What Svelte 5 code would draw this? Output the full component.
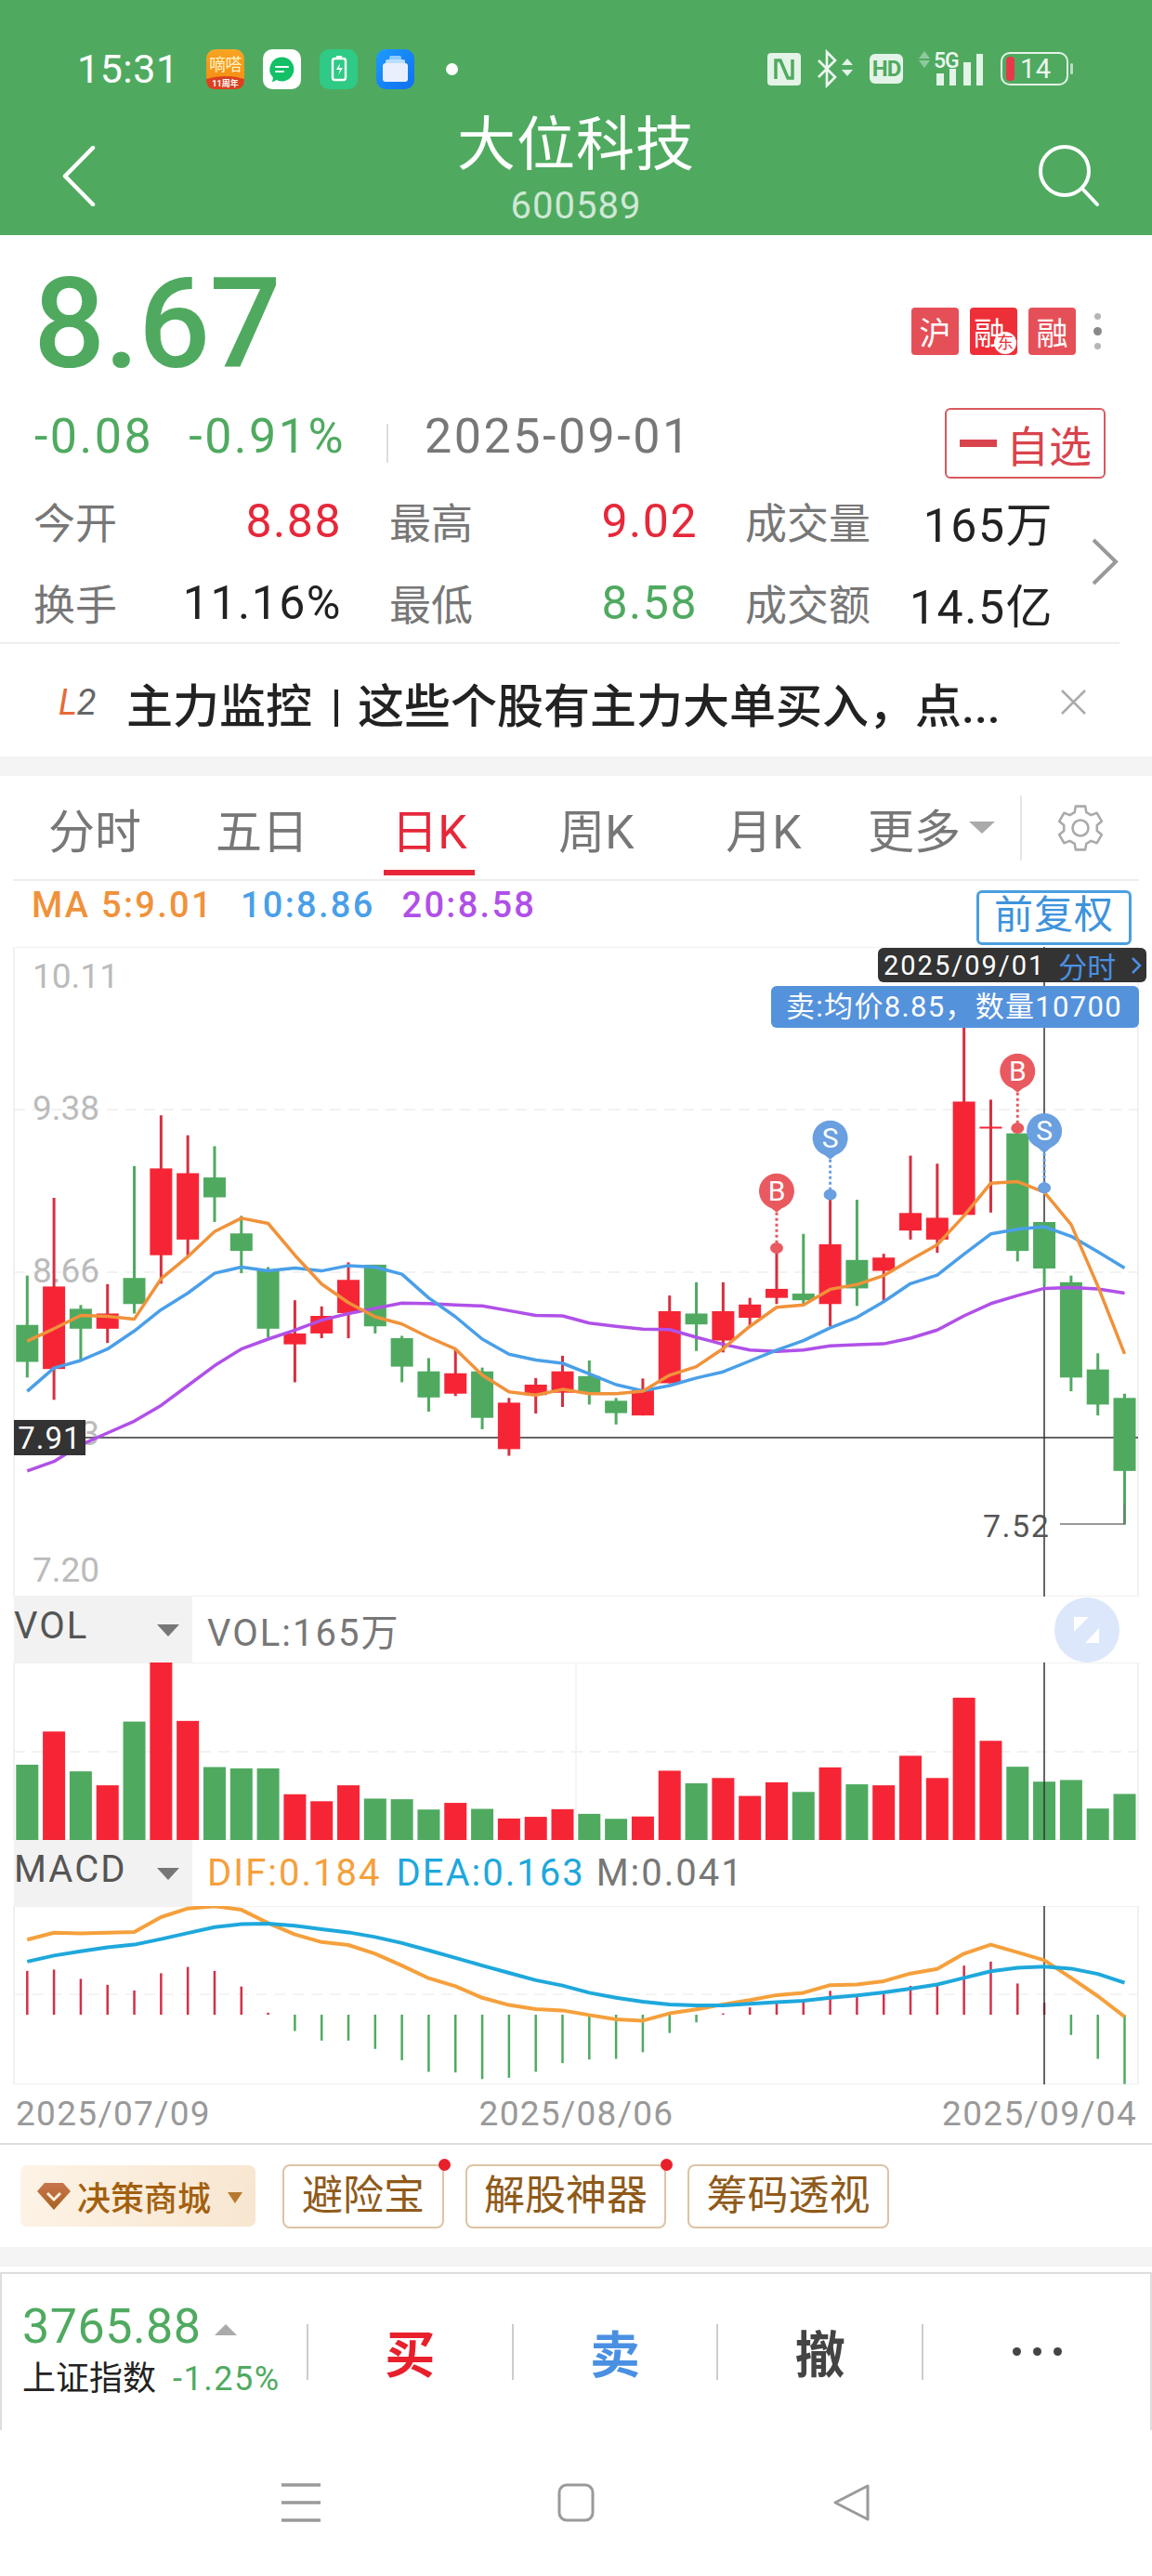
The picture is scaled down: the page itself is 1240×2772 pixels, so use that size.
<script>
	// Row values are in chart units; each pane maps them to its own pixels.
	const RED = '#f62535';
	const GREEN = '#4faa60';
	const slotX = (i) => 29.3 + 28.81 * i;

	const mainY = (v) => v / 1.96 - 79;
	const volY = (v) => v / 2.8 - 90;
	const macdY = (v) => v / 2.8 - 353;

	// high, body top, body bottom, low, up
	const candles = [
		[848, 952, 1030, 1063, 0], [684, 871, 1045, 1110, 1], [910, 918, 960, 1028, 0],
		[866, 928, 960, 990, 1], [617, 853, 908, 928, 0], [510, 622, 805, 865, 1],
		[552, 632, 772, 808, 1], [575, 641, 683, 735, 0], [722, 759, 796, 843, 0],
		[830, 835, 960, 978, 0], [900, 970, 993, 1073, 1], [913, 933, 970, 980, 1],
		[820, 857, 927, 980, 1], [825, 825, 955, 970, 0], [975, 980, 1040, 1073, 0],
		[1022, 1050, 1105, 1135, 0], [1005, 1054, 1097, 1102, 1], [1042, 1050, 1148, 1172, 0],
		[1106, 1116, 1214, 1228, 1], [1064, 1078, 1100, 1139, 1], [1017, 1050, 1095, 1125, 1],
		[1027, 1060, 1095, 1120, 0], [1106, 1112, 1138, 1162, 0], [1065, 1090, 1143, 1143, 1],
		[890, 923, 1075, 1075, 1], [862, 928, 951, 1007, 0], [862, 923, 985, 1010, 1],
		[895, 909, 937, 955, 1], [790, 876, 895, 908, 1], [760, 886, 900, 910, 0],
		[680, 782, 908, 955, 1], [688, 815, 875, 912, 0], [802, 810, 838, 905, 1],
		[595, 716, 753, 772, 1], [612, 726, 772, 800, 1], [300, 481, 720, 720, 1],
		[477, 534, 537, 715, 1], [548, 548, 796, 818, 0], [735, 735, 833, 870, 0],
		[848, 862, 1063, 1092, 0], [1012, 1046, 1120, 1143, 0], [1097, 1106, 1260, 1373, 0]
	];

	const ma5 = [986, 960, 932, 934, 940, 855, 808, 755, 727, 738, 805, 866, 905, 935, 950, 978, 1003, 1058, 1093, 1100, 1088, 1097, 1097, 1092, 1058, 1040, 1002, 955, 915, 910, 877, 867, 848, 815, 783, 722, 653, 650, 672, 740, 870, 1013];
	const ma10 = [1092, 1043, 1027, 1003, 965, 920, 885, 843, 830, 838, 832, 838, 827, 830, 845, 895, 935, 982, 1014, 1026, 1033, 1055, 1078, 1091, 1080, 1064, 1051, 1028, 1005, 985, 958, 936, 903, 865, 847, 803, 760, 750, 745, 765, 798, 832];
	const ma20 = [1260, 1240, 1205, 1180, 1155, 1122, 1080, 1038, 1003, 982, 963, 942, 928, 917, 906, 907, 910, 912, 922, 932, 933, 948, 955, 961, 962, 978, 993, 1005, 1008, 1005, 996, 994, 992, 980, 963, 933, 907, 890, 875, 873, 876, 885];

	const volTops = [560, 460, 580, 622, 430, 252, 428, 567, 571, 571, 649, 670, 622, 662, 664, 695, 675, 693, 722, 717, 694, 708, 723, 716, 578, 616, 600, 654, 613, 642, 568, 619, 622, 533, 600, 358, 488, 566, 611, 606, 692, 648];

	const MACD_ZERO = 1316;
	const macdEnds = [1184, 1180, 1208, 1226, 1243, 1191, 1172, 1184, 1231, 1310, 1365, 1394, 1394, 1419, 1453, 1488, 1490, 1510, 1506, 1488, 1462, 1451, 1449, 1429, 1371, 1339, 1312, 1294, 1275, 1272, 1244, 1254, 1250, 1229, 1224, 1168, 1156, 1222, 1280, 1377, 1449, 1525];
	const dif = [1090, 1069, 1071, 1069, 1067, 1022, 996, 989, 1000, 1040, 1074, 1097, 1106, 1132, 1168, 1206, 1230, 1265, 1287, 1299, 1303, 1317, 1330, 1334, 1312, 1300, 1285, 1272, 1257, 1250, 1227, 1225, 1215, 1192, 1178, 1132, 1105, 1128, 1152, 1205, 1260, 1322];
	const dea = [1156, 1138, 1125, 1113, 1105, 1088, 1070, 1052, 1043, 1042, 1048, 1058, 1068, 1082, 1100, 1122, 1145, 1168, 1190, 1212, 1228, 1250, 1265, 1277, 1285, 1288, 1288, 1283, 1278, 1274, 1265, 1258, 1249, 1238, 1225, 1205, 1185, 1175, 1171, 1177, 1193, 1220];

	const line = (values, toY) => values.map((v, i) => `${slotX(i).toFixed(1)},${toY(v).toFixed(1)}`).join(' ');

	// Trade markers: head centre, pointer tip, and the dot sitting on the candle
	const pins = [
		{ i: 28, kind: 'B', head: 670, tip: 715, dot: 790 },
		{ i: 30, kind: 'S', head: 558, tip: 603, dot: 677 },
		{ i: 37, kind: 'B', head: 417, tip: 462, dot: 537 },
		{ i: 38, kind: 'S', head: 543, tip: 590, dot: 663 }
	];

	const axis = [
		{ label: '10.11', y: 1049 },
		{ label: '9.38', y: 1191 },
		{ label: '8.66', y: 1366 },
		{ label: '7.93', y: 1541 },
		{ label: '7.20', y: 1688 }
	];

	const tabs = ['分时', '五日', '日K', '周K', '月K'];
	const stats = [
		[
			{ name: '今开', value: '8.88', tone: 'up' },
			{ name: '最高', value: '9.02', tone: 'up' },
			{ name: '成交量', value: '165万', tone: '' }
		],
		[
			{ name: '换手', value: '11.16%', tone: '' },
			{ name: '最低', value: '8.58', tone: 'down' },
			{ name: '成交额', value: '14.5亿', tone: '' }
		]
	];
	const tools = [
		{ name: '避险宝', width: 174, dot: true },
		{ name: '解股神器', width: 216, dot: true },
		{ name: '筹码透视', width: 217, dot: false }
	];

	// Six-toothed gear outline around (25, 25)
	function gearPath() {
		const pts = [];
		for (let t = 0; t < 6; t++) {
			const a = (-90 + t * 60) * (Math.PI / 180);
			for (const [r, off] of [[18, -0.36], [24, -0.22], [24, 0.22], [18, 0.36]]) {
				pts.push(`${(25 + r * Math.cos(a + off)).toFixed(1)},${(25 + r * Math.sin(a + off)).toFixed(1)}`);
			}
		}
		return pts.join(' ');
	}
</script>

<div class="page">
	<header class="top">
		<div class="status">
			<span class="clock">15:31</span>
			<svg class="app" viewBox="0 0 41 43">
				<defs>
					<linearGradient id="tick" x1="0" y1="0" x2="0" y2="1">
						<stop offset="0" stop-color="#f9a423" />
						<stop offset="1" stop-color="#f28a10" />
					</linearGradient>
				</defs>
				<rect width="41" height="43" rx="10" fill="url(#tick)" />
				<path d="M0 32 Q20 26 41 32 V33 Q41 43 31 43 H10 Q0 43 0 33Z" fill="#dc4020" />
				<text class="tick-name" x="20.5" y="23" text-anchor="middle">嘀嗒</text>
				<text class="tick-sub" x="20.5" y="40" text-anchor="middle">11周年</text>
			</svg>
			<svg class="app" viewBox="0 0 41 43">
				<rect width="41" height="43" rx="10" fill="#fff" />
				<path d="M20.5 8.5a13 13 0 1 1-6 24.6c-1.5 1.4-3.500 2-5 1.900 1-1.300 1.500-3 1.300-4.700A13 13 0 0 1 20.500 8.500Z" fill="#12c066" />
				<path d="M14 19h13M14 24h8" stroke="#fff" stroke-width="2.200" stroke-linecap="round" fill="none" />
			</svg>
			<svg class="app" viewBox="0 0 41 43">
				<rect width="41" height="43" rx="10" fill="#2fca85" />
				<rect x="14" y="10" width="14" height="23" rx="2.500" fill="none" stroke="#fff" stroke-width="2.400" />
				<rect x="18" y="7" width="6" height="3" fill="#fff" />
				<path d="M22 15l-4 7h4l-2 6 5-8h-4l1-5Z" fill="#fff" />
			</svg>
			<svg class="app" viewBox="0 0 41 43">
				<defs>
					<linearGradient id="cards" x1="0" y1="0" x2="1" y2="1">
						<stop offset="0" stop-color="#1e9bff" />
						<stop offset="1" stop-color="#0f6ff0" />
					</linearGradient>
				</defs>
				<rect width="41" height="43" rx="10" fill="url(#cards)" />
				<rect x="14" y="7" width="13" height="5" rx="2" fill="#8ccaff" />
				<rect x="10" y="11" width="21" height="6" rx="2" fill="#b8defc" />
				<rect x="7" y="15" width="27" height="20" rx="3" fill="#e8f0fd" />
			</svg>
			<span class="dot"></span>

			<div class="sys">
				<svg width="36" height="35" viewBox="0 0 36 35">
					<rect width="36" height="35" rx="4" fill="#e4f3e7" />
					<path d="M9 28V8h5l8 19h5V7" fill="none" stroke="#4faa60" stroke-width="3.500" />
				</svg>
				<svg width="40" height="38" viewBox="0 0 40 38">
					<path d="M2 10l18 18-9 9V1l9 9L2 28" fill="none" stroke="#eef8f0" stroke-width="2.600" />
					<path d="M27 15l6-7 6 7ZM27 20h12l-6 7Z" fill="#e4f3e7" />
				</svg>
				<svg width="36" height="32" viewBox="0 0 36 32">
					<rect width="36" height="32" rx="6" fill="#e4f3e7" />
					<text class="hd" x="18" y="24" text-anchor="middle">HD</text>
				</svg>
				<svg width="72" height="38" viewBox="0 0 72 38">
					<path d="M1 8l6-8 6 8ZM1 10h12l-6 8Z" fill="#8fca9c" />
					<text class="five-g" x="17" y="18">5G</text>
					<rect x="20" y="24" width="8" height="13" fill="#e4f3e7" />
					<rect x="34" y="19" width="7" height="18" fill="#e4f3e7" />
					<rect x="49" y="12" width="8" height="25" fill="#e4f3e7" />
					<rect x="63" y="3" width="7" height="34" fill="#e4f3e7" />
				</svg>
				<svg width="78" height="36" viewBox="0 0 78 36">
					<rect x="1" y="1" width="71" height="34" rx="9" fill="none" stroke="#e4f3e7" stroke-width="2" />
					<rect x="6" y="5" width="9" height="26" rx="4" fill="#e8394a" />
					<text class="batt" x="21" y="28">14</text>
					<rect x="75" y="12" width="3" height="12" rx="1.500" fill="#b9dfc1" />
				</svg>
			</div>
		</div>

		<div class="titlebar">
			<svg class="back" width="37" height="65" viewBox="0 0 37 65">
				<path d="M34 2L4 32.500 34 63" fill="none" stroke="#fff" stroke-width="4.500" stroke-linecap="round" stroke-linejoin="round" />
			</svg>
			<div class="title">
				<div class="name">大位科技</div>
				<div class="code">600589</div>
			</div>
			<svg class="search" width="68" height="68" viewBox="0 0 68 68">
				<circle cx="29" cy="29" r="26" fill="none" stroke="#fff" stroke-width="4" />
				<path d="M48 48l16 17" stroke="#fff" stroke-width="4" stroke-linecap="round" />
			</svg>
		</div>
	</header>

	<section class="quote">
		<div class="price-row">
			<div class="price">8.67</div>
			<div class="flags">
				<span class="flag">沪</span>
				<span class="flag strong">融<i>东</i></span>
				<span class="flag">融</span>
				<span class="more"><b></b><b class="mid"></b><b></b></span>
			</div>
		</div>

		<div class="change-row">
			<span class="chg">-0.08</span>
			<span class="chg pct">-0.91%</span>
			<span class="sep"></span>
			<span class="date">2025-09-01</span>
			<button class="watch"><b></b>自选</button>
		</div>

		<div class="stats-wrap">
			<div class="stats">
				{#each stats as row}
					{#each row as cell}
						<div class="stat">
							<span class="stat-name">{cell.name}</span>
							<span class="stat-value {cell.tone}">{cell.value}</span>
						</div>
					{/each}
				{/each}
			</div>
			<svg class="chev" width="30" height="51" viewBox="0 0 30 51">
				<path d="M3 2l24 23.500L3 49" fill="none" stroke="#999" stroke-width="4" />
			</svg>
		</div>

		<div class="promo">
			<span class="l2"><em>L</em>2</span>
			<span class="promo-text">主力监控<b></b>这些个股有主力大单买入，点...</span>
			<svg class="close" width="29" height="29" viewBox="0 0 29 29">
				<path d="M2 2l25 25M27 2L2 27" stroke="#aaa" stroke-width="2.600" />
			</svg>
		</div>
	</section>

	<div class="band"></div>

	<nav class="tabs">
		{#each tabs as tab, i}
			<span class="tab" class:active={i === 2}>{tab}</span>
		{/each}
		<span class="tab-more">更多<i></i></span>
		<span class="tab-sep"></span>
		<svg class="gear" width="50" height="50" viewBox="0 0 50 50">
			<polygon points={gearPath()} fill="none" stroke="#aaa" stroke-width="2.600" stroke-linejoin="round" />
			<circle cx="25" cy="25" r="8.500" fill="none" stroke="#aaa" stroke-width="2.600" />
		</svg>
	</nav>

	<div class="ma-row">
		<div class="ma-text">
			<span class="c5">MA 5:9.01</span>
			<span class="c10">10:8.86</span>
			<span class="c20">20:8.58</span>
		</div>
		<button class="adjust">前复权</button>
	</div>

	<div class="main-pane">
		<svg width="1240" height="699" viewBox="0 0 1240 699">
			<rect x="15" y="0" width="1210" height="699" fill="none" stroke="#f1f1f1" stroke-width="2" />
			<path d="M15 175H1225M15 350H1225" stroke="#eee" stroke-width="1.500" stroke-dasharray="12 8" />

			{#each axis as tick}
				<text class="axis" x="35" y={tick.y - 1019 + 14}>{tick.label}</text>
			{/each}

			<path d="M15 528H1225" stroke="#333" stroke-width="1.500" />
			<path d="M1124 0V699" stroke="#333" stroke-width="1.500" />

			{#each candles as [high, top, bottom, low, up], i}
				<rect x={slotX(i) - 1.500} y={mainY(high)} width="3" height={mainY(low) - mainY(high)} fill={up ? '#d4303f' : GREEN} />
				<rect x={slotX(i) - 12} y={mainY(top)} width="24" height={Math.max(mainY(bottom) - mainY(top), 2)} fill={up ? RED : GREEN} />
			{/each}

			<polyline points={line(ma20, mainY)} class="trend" stroke="#b050e8" />
			<polyline points={line(ma10, mainY)} class="trend" stroke="#4a9fe8" />
			<polyline points={line(ma5, mainY)} class="trend" stroke="#f0923a" />

			{#each pins as pin}
				{@const x = slotX(pin.i)}
				{@const tone = pin.kind === 'B' ? '#e85a5f' : '#6a9fe0'}
				<path d="M{x} {mainY(pin.tip)}V{mainY(pin.dot)}" stroke={tone} stroke-width="3" stroke-dasharray="3 3" />
				<ellipse cx={x} cy={mainY(pin.dot)} rx="7" ry="6" fill={tone} />
				<path d="M{x - 16} {mainY(pin.head) + 10}L{x} {mainY(pin.tip)}L{x + 16} {mainY(pin.head) + 10}Z" fill={tone} />
				<circle cx={x} cy={mainY(pin.head)} r="19" fill={tone} />
				<text class="pin" x={x} y={mainY(pin.head) + 10} text-anchor="middle">{pin.kind}</text>
			{/each}

			<rect x="15" y="509" width="77" height="38" fill="#333" />
			<text class="tag" x="53.500" y="540" text-anchor="middle">7.91</text>

			<text class="low" x="1058" y="635">7.52</text>
			<path d="M1141 621H1210V600" fill="none" stroke="#777" stroke-width="1.500" />
		</svg>

		<div class="day-tip">
			<span class="day">2025/09/01</span>
			<span class="day-link">分时</span>
			<svg width="12" height="20" viewBox="0 0 12 20"><path d="M2 2l8 8-8 8" fill="none" stroke="#4a90e2" stroke-width="2.500" /></svg>
		</div>
		<div class="deal-tip">卖:均价8.85，数量10700</div>
	</div>

	<div class="sub-head">
		<div class="selector">VOL<i></i></div>
		<span class="readout muted">VOL:165万</span>
		<span class="expand">
			<svg width="70" height="70" viewBox="0 0 70 70">
				<circle cx="35" cy="35" r="35" fill="#dde7fb" />
				<path d="M21 21h16L21 37ZM48 33v16H33Z" fill="#fff" />
			</svg>
		</span>
	</div>

	<svg class="sub-chart" width="1240" height="191" viewBox="0 0 1240 191">
		<rect x="15" y="0" width="1210" height="191" fill="none" stroke="#f1f1f1" stroke-width="2" />
		<path d="M15 96H1225" stroke="#eee" stroke-width="1.500" stroke-dasharray="12 8" />
		<path d="M620 0V191" stroke="#f0f0f0" stroke-width="1.500" />
		{#each volTops as top, i}
			<rect x={slotX(i) - 12} y={volY(top)} width="24" height={191 - volY(top)} fill={candles[i][4] ? RED : GREEN} />
		{/each}
		<path d="M1124 0V191" stroke="#333" stroke-width="1.500" />
	</svg>

	<div class="sub-head">
		<div class="selector">MACD<i></i></div>
		<span class="readout dif">DIF:0.184</span>
		<span class="readout dea">DEA:0.163</span>
		<span class="readout muted tight">M:0.041</span>
	</div>

	<svg class="sub-chart" width="1240" height="192" viewBox="0 0 1240 192">
		<rect x="15" y="0" width="1210" height="192" fill="none" stroke="#f1f1f1" stroke-width="2" />
		<path d="M15 95H1225" stroke="#f1f1f1" stroke-width="1.500" stroke-dasharray="12 8" />
		{#each macdEnds as end, i}
			{@const up = end < MACD_ZERO}
			<rect
				x={slotX(i) - 1.250}
				y={macdY(Math.min(end, MACD_ZERO))}
				width="2.500"
				height={Math.abs(macdY(end) - macdY(MACD_ZERO))}
				fill={up ? '#d2304a' : GREEN}
			/>
		{/each}
		<path d="M1124 0V192" stroke="#333" stroke-width="1.500" />
		<polyline points={line(dif, macdY)} class="trend wide" stroke="#f5a03c" />
		<polyline points={line(dea, macdY)} class="trend wide" stroke="#1ea8dc" />
	</svg>

	<div class="dates">
		<span>2025/07/09</span>
		<span>2025/08/06</span>
		<span>2025/09/04</span>
	</div>

	<div class="tools">
		<div class="mall">
			<svg width="36" height="30" viewBox="0 0 36 30">
				<defs>
					<linearGradient id="gem" x1="0" y1="0" x2="0" y2="1">
						<stop offset="0" stop-color="#c9754d" />
						<stop offset="1" stop-color="#a6621f" />
					</linearGradient>
				</defs>
				<path d="M8 1h20l8 9-18 20L0 10Z" fill="url(#gem)" />
				<path d="M11 12l7 7 7-7" fill="none" stroke="#fdf0e0" stroke-width="3" />
			</svg>
			<span>决策商城</span>
			<i></i>
		</div>
		{#each tools as tool}
			<div class="tool" style="width:{tool.width}px">
				{tool.name}
				{#if tool.dot}<b></b>{/if}
			</div>
		{/each}
	</div>

	<div class="band lower"></div>

	<div class="trade">
		<div class="index">
			<div class="index-top"><span class="index-num">3765.88</span><i></i></div>
			<div class="index-sub"><span>上证指数</span><span class="index-pct">-1.25%</span></div>
		</div>
		<div class="action buy">买</div>
		<div class="action sell">卖</div>
		<div class="action undo">撤</div>
		<div class="action ell"><b></b><b></b><b></b></div>
	</div>

	<div class="softkeys">
		<span class="key">
			<svg width="42" height="42" viewBox="0 0 42 42"><path d="M0 2H42M0 21H42M0 40H42" stroke="#9a9a9a" stroke-width="3.500" /></svg>
		</span>
		<span class="key">
			<svg width="40" height="42" viewBox="0 0 40 42"><rect x="2" y="2" width="36" height="38" rx="8" fill="none" stroke="#9a9a9a" stroke-width="3" /></svg>
		</span>
		<span class="key">
			<svg width="40" height="40" viewBox="0 0 40 40"><path d="M38 2v36L3 20Z" fill="none" stroke="#9a9a9a" stroke-width="3" stroke-linejoin="round" /></svg>
		</span>
	</div>
</div>

<style>
	:global(body) {
		margin: 0;
		background: #fff;
	}

	.page {
		width: 1240px;
		height: 2772px;
		overflow: hidden;
		font-family: Roboto, 'Noto Sans CJK SC', sans-serif;
		color: #222;
	}

	button {
		padding: 0;
		background: none;
		font-family: inherit;
	}

	/* header */
	.top {
		height: 253px;
		box-sizing: border-box;
		padding-top: 50px;
		background: #4faa60;
		color: #fff;
	}

	.status {
		display: flex;
		height: 48px;
		align-items: center;
		padding-left: 83px;
	}

	.clock {
		width: 139px;
		font-size: 43px;
		letter-spacing: 0.5px;
	}

	.app {
		width: 41px;
		height: 43px;
		margin-right: 20px;
	}

	.tick-name {
		fill: #fff3c4;
		font-size: 18px;
		letter-spacing: -0.5px;
	}

	.tick-sub {
		fill: #fff;
		font-size: 9px;
		font-weight: 700;
	}

	.dot {
		width: 13px;
		height: 13px;
		margin-left: 14px;
		border-radius: 50%;
		background: #fff;
	}

	.sys {
		display: flex;
		width: 329px;
		align-items: center;
		justify-content: space-between;
		margin-left: auto;
		margin-right: 85px;
	}

	.sys svg {
		overflow: visible;
	}

	.hd {
		fill: #4faa60;
		font-size: 24px;
		font-weight: 700;
		letter-spacing: -1px;
	}

	.five-g {
		fill: #eef8f0;
		font-size: 23px;
		font-weight: 500;
		letter-spacing: -1px;
	}

	.batt {
		fill: #eef8f0;
		font-size: 29px;
		letter-spacing: 0.500px;
	}

	.titlebar {
		display: grid;
		grid-template-columns: 1fr auto 1fr;
		align-items: start;
		margin-top: 22px;
	}

	.back {
		margin: 37px 0 0 66px;
	}

	.name {
		font-size: 63px;
		line-height: 72px;
		letter-spacing: 1px;
	}

	.title {
		text-align: center;
	}

	.code {
		margin-top: 7px;
		color: #cfe8d5;
		font-size: 40px;
		line-height: 46px;
		letter-spacing: 1px;
	}

	.search {
		justify-self: end;
		margin: 35px 55px 0 0;
	}

	/* quote */
	.quote {
		height: 561px;
	}

	.price-row {
		display: flex;
		height: 180px;
		align-items: flex-start;
		justify-content: space-between;
		padding: 0 54px 0 36px;
		box-sizing: border-box;
		width: 1240px;
	}

	.price {
		margin-top: 34px;
		color: #4faa60;
		font-size: 136px;
		font-weight: 500;
		line-height: 124px;
		letter-spacing: -1px;
	}

	.flags {
		display: flex;
		align-items: center;
		gap: 12px;
		margin-top: 78px;
	}

	.flag {
		position: relative;
		display: flex;
		width: 51px;
		height: 51px;
		align-items: center;
		justify-content: center;
		overflow: hidden;
		border-radius: 4px;
		background: #e55058;
		color: #fff;
		font-size: 34px;
	}

	.flag.strong {
		background: #ee2f38;
		justify-content: flex-start;
		padding-left: 4px;
		box-sizing: border-box;
	}

	.flag i {
		position: absolute;
		right: 1px;
		bottom: 1px;
		width: 24px;
		height: 24px;
		border-radius: 50%;
		background: #fff;
		color: #ee2f38;
		font-size: 18px;
		font-style: normal;
		line-height: 24px;
		text-align: center;
	}

	.more {
		display: flex;
		flex-direction: column;
		align-items: center;
		gap: 8px;
		margin-left: 7px;
	}

	.more b {
		width: 7px;
		height: 7px;
		border-radius: 50%;
		background: #b5b5b5;
	}

	.more b.mid {
		width: 9px;
		height: 9px;
		background: #888;
	}

	.change-row {
		display: flex;
		height: 76px;
		align-items: center;
		padding-left: 37px;
		margin-top: 6px;
		font-size: 52px;
		letter-spacing: 2.500px;
	}

	.chg,
	.date {
		margin-top: -16px;
	}

	.chg {
		color: #4faa60;
	}

	.pct {
		margin-left: 38px;
	}

	.sep {
		width: 2px;
		height: 42px;
		margin: 0 39px 0 44px;
		background: #ddd;
	}

	.date {
		color: #777;
	}

	.watch {
		display: flex;
		width: 173px;
		height: 76px;
		align-items: center;
		gap: 10px;
		margin-left: auto;
		margin-right: 50px;
		padding-left: 14px;
		box-sizing: border-box;
		border: 2px solid #d9595f;
		border-radius: 6px;
		color: #d9434c;
		font-size: 46px;
		letter-spacing: 0;
	}

	.watch b {
		width: 40px;
		height: 8px;
		background: #d9434c;
	}

	.stats-wrap {
		display: flex;
		height: 175px;
		align-items: center;
		margin-top: 3px;
		padding-left: 36px;
		border-bottom: 2px solid #eee;
		margin-right: 35px;
		box-sizing: border-box;
	}

	.stats {
		display: grid;
		grid-template-columns: repeat(3, 332px);
		grid-auto-rows: 88px;
		column-gap: 51px;
		width: 1098px;
	}

	.stat {
		display: flex;
		align-items: center;
		justify-content: space-between;
	}

	.stat-name {
		color: #777;
		font-size: 45px;
	}

	.stat-value {
		color: #222;
		font-size: 50px;
		letter-spacing: 1.500px;
	}

	.stat-value.up {
		color: #e6283a;
	}

	.stat-value.down {
		color: #4faa60;
	}

	.chev {
		margin-left: 40px;
	}

	.promo {
		display: flex;
		height: 125px;
		align-items: center;
		padding-left: 63px;
	}

	.l2 {
		width: 73px;
		color: #666;
		font-size: 38px;
		font-style: italic;
	}

	.l2 em {
		color: #e8683a;
	}

	.promo-text {
		width: 1005px;
		font-size: 50px;
		font-weight: 500;
		white-space: nowrap;
	}

	.promo-text b {
		display: inline-block;
		width: 4px;
		height: 40px;
		margin: 0 21px 0 24px;
		background: #222;
		vertical-align: -4px;
	}

	.band {
		height: 21px;
		background: #f4f4f4;
	}

	/* period tabs */
	.tabs {
		display: flex;
		height: 113px;
		box-sizing: border-box;
		align-items: center;
		margin: 0 14px;
		border-bottom: 2px solid #eee;
	}

	.tab {
		position: relative;
		width: 180px;
		color: #777;
		font-size: 50px;
		text-align: center;
	}

	.tab:first-child {
		margin-left: -2px;
	}

	.tab.active {
		color: #e6283a;
	}

	.tab.active::after {
		content: '';
		position: absolute;
		left: 41px;
		bottom: -15px;
		width: 98px;
		height: 6px;
		background: #e6283a;
	}

	.tab-more {
		display: flex;
		align-items: center;
		margin-left: 22px;
		color: #777;
		font-size: 50px;
	}

	.tab-more i {
		margin: 0 0 0 9px;
		border-top: 13px solid #aaa;
		border-left: 14px solid transparent;
		border-right: 14px solid transparent;
	}

	.tab-sep {
		width: 2px;
		height: 70px;
		margin-left: 27px;
		background: #e6e6e6;
	}

	.gear {
		margin-left: 38px;
	}

	/* chart */
	.ma-row {
		display: flex;
		height: 71px;
		align-items: flex-start;
		justify-content: space-between;
		padding: 10px 22px 0 34px;
		box-sizing: border-box;
	}

	.ma-text {
		display: flex;
		gap: 29px;
		font-size: 38px;
		font-weight: 500;
		line-height: 32px;
		letter-spacing: 2.300px;
	}

	.c5 {
		color: #f0923a;
	}

	.c10 {
		color: #4a9fe8;
	}

	.c20 {
		color: #b050e8;
	}

	.adjust {
		width: 167px;
		height: 59px;
		box-sizing: border-box;
		border: 3px solid #4a9fe0;
		border-radius: 6px;
		color: #3d93dc;
		font-size: 42px;
		line-height: 46px;
		padding-bottom: 6px;
		letter-spacing: 1px;
	}

	.main-pane {
		position: relative;
		height: 699px;
	}

	.main-pane > svg,
	.sub-chart {
		display: block;
	}

	.axis {
		fill: #bbb;
		font-size: 37px;
	}

	.tag {
		fill: #fff;
		font-size: 33px;
		letter-spacing: 1px;
	}

	.low {
		fill: #555;
		font-size: 34px;
		letter-spacing: 1.500px;
	}

	.pin {
		fill: #fff;
		font-size: 30px;
	}

	.trend {
		fill: none;
		stroke-width: 3.500;
		stroke-linejoin: round;
	}

	.trend.wide {
		stroke-width: 4;
	}

	.day-tip {
		position: absolute;
		left: 945px;
		top: 1px;
		display: flex;
		width: 289px;
		height: 37px;
		align-items: center;
		box-sizing: border-box;
		padding-left: 6px;
		border-radius: 6px;
		background: #333;
		white-space: nowrap;
	}

	.day-tip svg {
		flex: none;
		margin-left: 16px;
	}

	.day {
		color: #fff;
		font-size: 29px;
		letter-spacing: 2px;
	}

	.day-link {
		margin-left: 14px;
		color: #4a90e2;
		font-size: 31px;
	}

	.deal-tip {
		position: absolute;
		left: 830px;
		top: 42px;
		width: 396px;
		height: 45px;
		box-sizing: border-box;
		padding-left: 16px;
		border-radius: 6px;
		background: #5592dc;
		color: #fff;
		font-size: 31px;
		line-height: 45px;
		letter-spacing: 1.300px;
		white-space: nowrap;
	}

	.sub-head {
		display: flex;
		height: 71px;
		align-items: center;
		margin-left: 15px;
		font-size: 40px;
		letter-spacing: 2px;
	}

	.selector {
		position: relative;
		width: 192px;
		height: 71px;
		flex: none;
		box-sizing: border-box;
		background: #f2f2f2;
		color: #555;
		line-height: 64px;
	}

	.selector i {
		position: absolute;
		left: 154px;
		top: 30px;
		border-top: 13px solid #777;
		border-left: 12px solid transparent;
		border-right: 12px solid transparent;
	}

	.readout {
		margin-left: 16px;
	}

	.readout.tight {
		margin-left: 12px;
	}

	.muted {
		color: #777;
	}

	.dif {
		color: #f5a03c;
	}

	.dea {
		color: #1ea8dc;
	}

	.expand {
		margin-left: auto;
		margin-right: 35px;
		height: 70px;
	}

	.dates {
		display: flex;
		height: 65px;
		box-sizing: border-box;
		align-items: center;
		justify-content: space-between;
		padding: 0 16px 0 17px;
		border-bottom: 2px solid #ddd;
		color: #999;
		font-size: 37px;
		letter-spacing: 1.300px;
	}

	/* tool chips */
	.tools {
		display: flex;
		height: 110px;
		align-items: center;
		gap: 23px;
		padding-left: 22px;
	}

	.mall {
		display: flex;
		width: 253px;
		height: 66px;
		align-items: center;
		margin-right: 6px;
		padding-left: 18px;
		box-sizing: border-box;
		border-radius: 7px;
		background: linear-gradient(100deg, #fdf3e6, #f8e6cf);
		color: #a3600f;
		font-size: 36px;
		font-weight: 500;
	}

	.mall span {
		margin-left: 7px;
	}

	.mall i {
		margin: 3px 0 0 18px;
		border-top: 12px solid #b87a2e;
		border-left: 8px solid transparent;
		border-right: 8px solid transparent;
	}

	.tool {
		position: relative;
		height: 69px;
		box-sizing: border-box;
		border: 2px solid #dcc4a4;
		border-radius: 8px;
		color: #8f5a1a;
		font-size: 44px;
		line-height: 64px;
		text-align: center;
	}

	.tool b {
		position: absolute;
		right: -9px;
		top: -8px;
		width: 13px;
		height: 13px;
		border-radius: 50%;
		background: #e8202c;
	}

	.band.lower {
		margin-bottom: 6px;
	}

	/* order bar */
	.trade {
		display: flex;
		height: 170px;
		box-sizing: border-box;
		align-items: center;
		border: 2px solid #ddd;
		border-bottom: none;
		padding-bottom: 1px;
	}

	.index {
		width: 328px;
		padding-left: 22px;
		box-sizing: border-box;
	}

	.index-top {
		display: flex;
		height: 48px;
		align-items: center;
	}

	.index-num {
		color: #4faa60;
		font-size: 52px;
		letter-spacing: 0.500px;
	}

	.index-top i {
		margin: 6px 0 0 14px;
		border-bottom: 12px solid #aaa;
		border-left: 12px solid transparent;
		border-right: 12px solid transparent;
	}

	.index-sub {
		display: flex;
		align-items: center;
		margin-top: 10px;
		font-size: 36px;
		line-height: 44px;
	}

	.index-pct {
		margin-left: 18px;
		color: #4faa60;
		font-size: 36px;
		letter-spacing: 1.500px;
	}

	.action {
		display: flex;
		width: 221px;
		height: 60px;
		align-items: center;
		justify-content: center;
		border-left: 2px solid #ccc;
		box-sizing: border-box;
		font-size: 54px;
		font-weight: 700;
	}

	.buy {
		color: #e8202c;
	}

	.sell {
		color: #4a90e2;
	}

	.undo {
		color: #444;
	}

	.ell {
		width: 246px;
		gap: 13px;
	}

	.ell b {
		width: 9px;
		height: 9px;
		border-radius: 50%;
		background: #444;
	}

	/* soft keys */
	.softkeys {
		display: flex;
		height: 155px;
		align-items: center;
		justify-content: center;
	}

	.key {
		display: flex;
		width: 296px;
		justify-content: center;
	}
</style>
